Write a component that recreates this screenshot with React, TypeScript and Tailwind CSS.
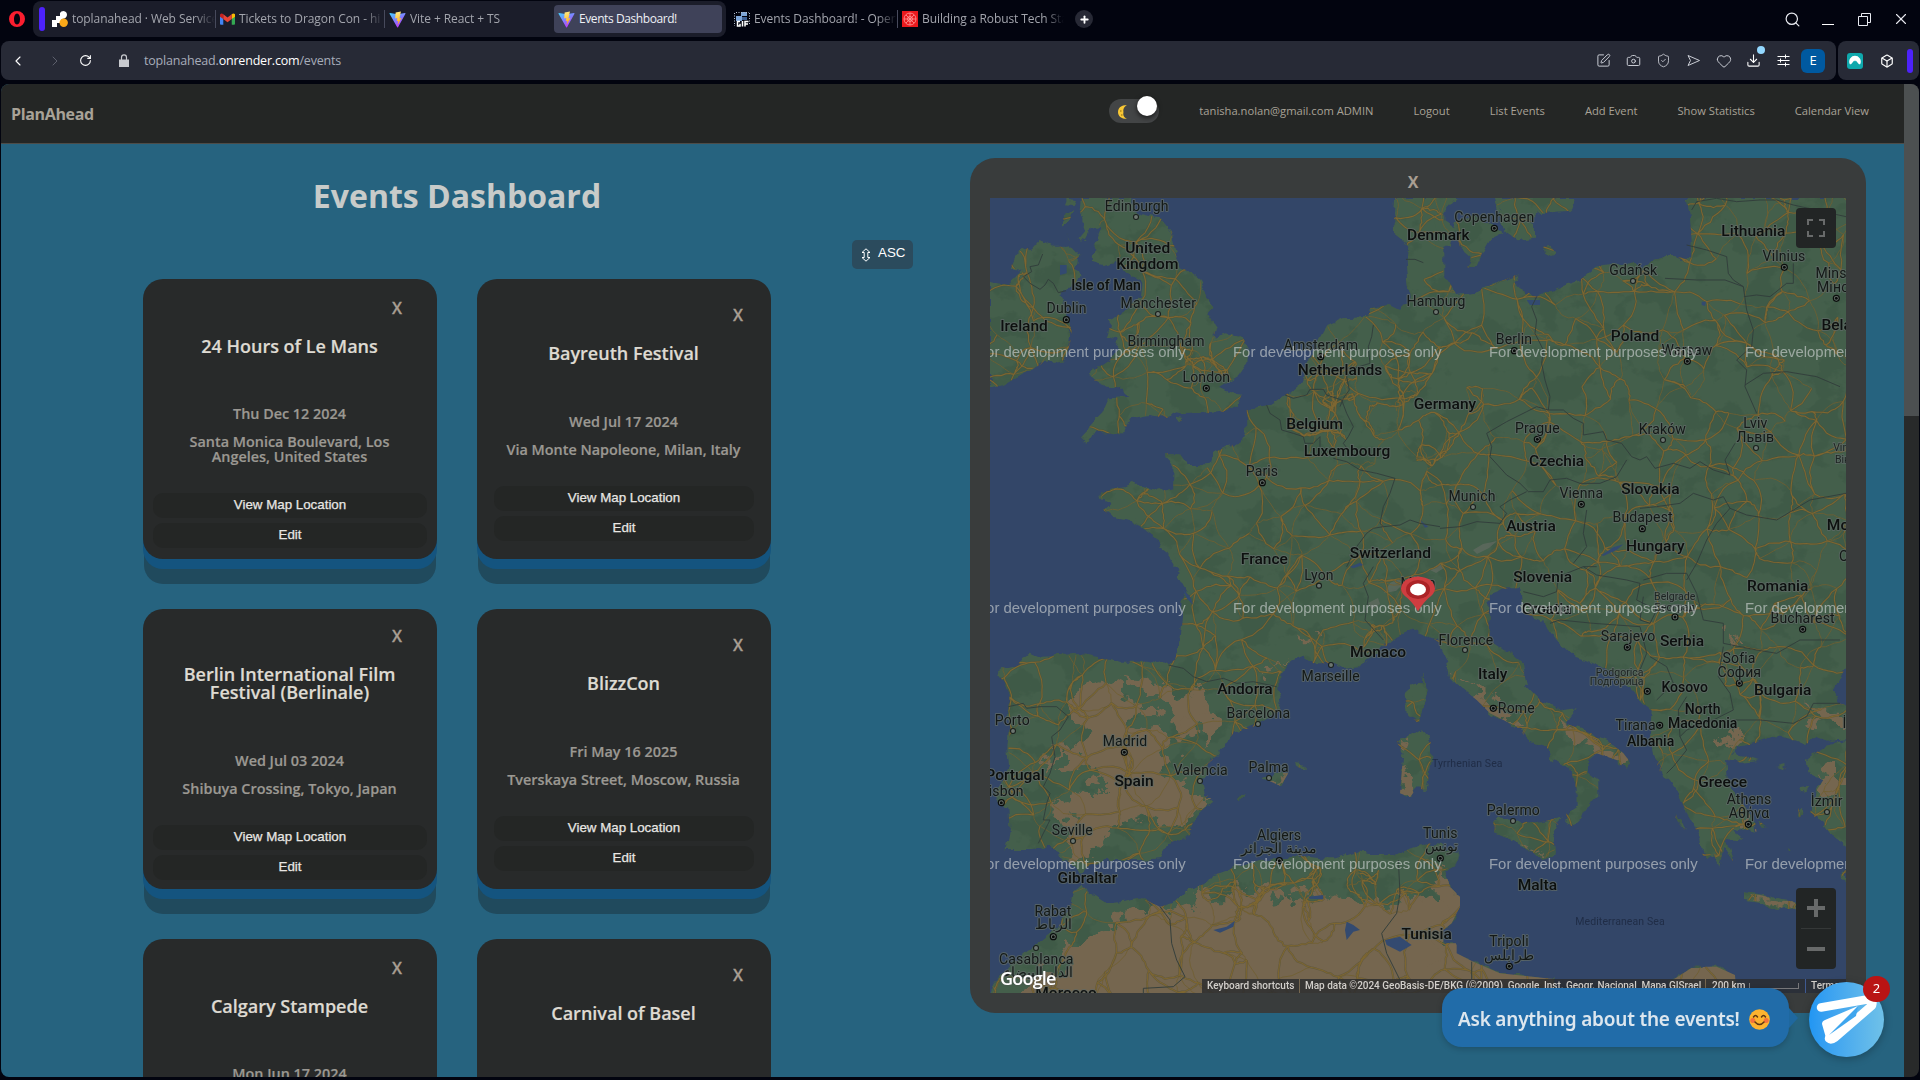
import React from "react";
import {
  Box, Camera, ChevronLeft, ChevronRight, Download, Heart, PenSquare,
  Plus, RotateCw, Search, ShieldCheck, X,
} from "lucide-react";

/* ---------- browser chrome ---------- */

const ViteIcon = () => (
  <svg viewBox="0 0 32 32" className="h-[17px] w-[17px] shrink-0">
    <defs>
      <linearGradient id="va" x1="0" y1="0" x2="0.6" y2="1"><stop offset="0" stopColor="#41d1ff" /><stop offset="1" stopColor="#bd34fe" /></linearGradient>
      <linearGradient id="vb" x1="0.4" y1="0" x2="0.6" y2="1"><stop offset="0" stopColor="#ffea83" /><stop offset="1" stopColor="#ffa800" /></linearGradient>
    </defs>
    <path d="M31 5 17 30.500q-.8 1-1.600 0L1 5q-.5-1.500 1-1.300L16 6.200 30 3.700q1.500 0 1 1.300z" fill="url(#va)" />
    <path d="m22.500 1-10 2-.8 11 4-.9-1 6 3-.8-1.700 8 7.600-13-4 .7z" fill="url(#vb)" />
  </svg>
);

const ServiceIcon = () => (
  <svg viewBox="0 0 16 16" className="h-4 w-4 shrink-0">
    <path d="M0 16V9h4V5h4V2q1-2 3.500-2Q15 .500 15 4q-.5 3.500-4.500 4L9 9v3H5v4z" fill="#fff" />
    <circle cx="11.700" cy="11.700" r="4.200" fill="#fba919" />
  </svg>
);

const GmailIcon = () => (
  <svg viewBox="0 0 16 12" className="h-3 w-[15px] shrink-0">
    <path d="M0 1.500h3.500V12H1q-1 0-1-1z" fill="#4285f4" />
    <path d="M12.500 1.500H16V11q0 1-1 1h-2.500z" fill="#34a853" />
    <path d="M12.500 1q2-2 3.500 0v2.500l-3.500 2.600z" fill="#fbbc04" />
    <path d="M3.500 1 8 4.400 12.500 1v5L8 9.500 3.500 6z" fill="#ea4335" />
    <path d="M0 1.500Q1.500-1 3.500 1v5L0 3.500z" fill="#c5221f" />
  </svg>
);

const GifIcon = () => (
  <svg viewBox="0 0 16 16" className="h-4 w-4 shrink-0">
    <path d="M7 1h6v4H7zM2 5h6v5H2z" fill="#7ea6d8" />
    <path d="M.5 2v13M15.500 2v12M2 1.500h13" stroke="#b9c4d4" strokeDasharray="1 1.500" />
    <path d="M8 6h5v3H8z" fill="#3e6195" />
    <path d="M6 10.500H3.500V15H6v-2.200M8.500 10v5.500M11 15.500v-5h3.500M11 13h3" stroke="#fff" strokeWidth="1.500" fill="none" />
  </svg>
);

const RedIcon = () => (
  <svg viewBox="0 0 16 16" className="h-4 w-4 shrink-0">
    <path d="M0 0h16v16H0z" fill="#e8191d" />
    <g fill="none" stroke="#ff9a9a" strokeWidth=".8"><circle cx="8" cy="8" r="6" /><circle cx="8" cy="8" r="2.500" /><path d="M8 2v12M2 8h12M4 4l8 8M12 4l-8 8" /></g>
  </svg>
);

function Tab({ icon, title, width, active = false }: { icon: React.ReactNode; title: string; width: string; active?: boolean }) {
  return (
    <div className={"flex h-7 shrink-0 items-center gap-1 rounded pl-1 " + width + (active ? " bg-[#3f4259] text-[#eef0f5]" : " text-[#a3a5ad]")}>
      {icon}
      <span className={"min-w-0 flex-1 overflow-hidden whitespace-nowrap text-[12px] leading-5 " + (active ? "tracking-[-0.42px]" : "tracking-[-0.08px] [mask-image:linear-gradient(90deg,#000_86%,transparent_100%)]")}>{title}</span>
    </div>
  );
}

const Sep = () => <div className="h-[18px] w-px shrink-0 bg-[#474a5c]" />;

function TabStrip() {
  return (
    <div className="flex h-[41px] shrink-0 pt-px">
      <div className="flex w-[33px] items-center pl-[9px] pb-1">
        <svg viewBox="0 0 16 16" className="h-4 w-4"><path fillRule="evenodd" fill="#fa1e2f" d="M8 0a8 8 0 1 0 0 16A8 8 0 0 0 8 0m0 2.500c2 0 3 2.500 3 5.500s-1 5.500-3 5.500S5 11 5 8s1-5.500 3-5.500" /></svg>
      </div>
      <div className="flex h-9 w-[693px] shrink-0 items-center rounded-lg bg-[#1b1d2a] pl-1.5">
        <div className="mr-[3px] h-6 w-1.5 rounded bg-[#4d22fb]" />
        <Tab icon={<ServiceIcon />} title="toplanahead · Web Service · Render" width="w-[167px]" />
        <Sep />
        <Tab icon={<GmailIcon />} title="Tickets to Dragon Con - hi there" width="w-[168px]" />
        <Sep />
        <Tab icon={<ViteIcon />} title="Vite + React + TS" width="w-[169px]" />
        <Tab icon={<ViteIcon />} title="Events Dashboard!" width="w-[168px]" active />
      </div>
      <div className="flex h-9 items-center pl-1">
        <Tab icon={<GifIcon />} title="Events Dashboard! - Opera GX" width="w-[167px]" />
        <Sep />
        <Tab icon={<RedIcon />} title="Building a Robust Tech Stack" width="w-[166px]" />
        <div className="ml-[11px] flex h-[18px] w-[18px] items-center justify-center rounded-full bg-[#272935] text-white"><Plus size={11} strokeWidth={4} /></div>
      </div>
      <div className="ml-auto flex h-9 items-center text-[#e8eaf0]">
        <Search size={17} strokeWidth={1.700} className="mr-[21px]" />
        <div className="mr-6 mt-[11px] h-px w-3 bg-white" />
        <svg viewBox="0 0 13 13" className="mr-[21px] h-[13px] w-[13px]" fill="none" stroke="currentColor"><path d="M3.500 3.500v-3h9v9h-3M.5 3.500h9v9h-9z" /></svg>
        <X size={18} strokeWidth={1.500} className="mr-2.5" />
      </div>
    </div>
  );
}

function AddressBar() {
  return (
    <div className="flex h-[39px] shrink-0 gap-0.5 pl-px">
      <div className="flex w-[1835px] items-center rounded-lg bg-[#272a36] text-[#c9ccd4]">
        <ChevronLeft size={16} strokeWidth={1.700} className="ml-[9px] text-white" />
        <ChevronRight size={16} strokeWidth={1.500} className="ml-[21px] text-[#5d606d]" />
        <RotateCw size={13} strokeWidth={2} className="ml-4 text-white" />
        <svg viewBox="0 0 10 14" className="ml-[27px] h-3.5 w-2.5 shrink-0"><path d="M0 5.500h10V13H0z" fill="#c8cacf" /><path d="M2.500 6V3.500q0-2.700 2.500-2.700t2.500 2.700V6" fill="none" stroke="#c8cacf" strokeWidth="1.200" /></svg>
        <div className="ml-[15px] pt-px text-[12.500px] tracking-[-0.19px] text-[#a7adba]">toplanahead.<span className="text-white">onrender.com</span>/events</div>
        <div className="ml-auto mr-[11px] flex items-center gap-[15px]">
          <PenSquare size={15} strokeWidth={1.600} />
          <Camera size={15} strokeWidth={1.600} />
          <ShieldCheck size={15} strokeWidth={1.400} />
          <svg viewBox="0 0 15 15" className="h-[15px] w-[15px]" fill="none" stroke="currentColor" strokeLinejoin="round"><path d="M2 2.500 13.500 7.500 2 12.500l2.500-5z" /></svg>
          <Heart size={16} strokeWidth={1.500} className="-mx-[.5px]" />
          <div className="relative text-white">
            <Download size={15} strokeWidth={1.700} />
            <div className="absolute -right-1 -top-[7px] h-2 w-2 rounded-full bg-[#93d8ff]" />
          </div>
          <svg viewBox="0 0 15 15" className="h-[15px] w-[15px]" fill="none" stroke="#fff"><path d="M1.500 3.500h12M1.500 7.500h12M1.500 11.500h12M9.500 1.500v4M4.500 5.500v4M9.500 9.500v4" /></svg>
          <div className="-ml-[5px] flex h-6 w-6 items-center justify-center rounded-md bg-[#0059a0] text-[13px] text-white">E</div>
        </div>
      </div>
      <div className="flex w-[81px] items-center rounded-lg bg-[#272a36]">
        <svg viewBox="0 0 16 16" className="ml-[9px] h-4 w-4"><rect width="16" height="16" rx="3" fill="#0fa8ac" /><path d="M2.500 10.500a5.800 5.800 0 1 1 11 0q-.8 1.600-2 .2L8.800 7.500 8 8.600 7.200 7.500 4.500 10.700q-1.200 1.400-2-.2" fill="#fff" /></svg>
        <Box size={14} strokeWidth={2} className="ml-[17px] text-white" />
        <div className="ml-[13px] h-6 w-1.5 rounded bg-[#4d22fb]" />
      </div>
    </div>
  );
}

/* ---------- site ---------- */

function SiteHeader() {
  return (
    <header className="flex h-[60px] shrink-0 items-center border-b border-[#4d4c48] bg-[#242625] pl-[10px] text-[#a8a297]">
      <div className="text-[16px] font-bold tracking-[-0.35px]">PlanAhead</div>
      <div className="ml-auto flex items-center gap-10 pb-1 pr-[35px] text-[11.200px]">
        <div className="relative -mt-px h-6 w-[50px] rounded-full bg-[#434546]">
          <svg viewBox="0 0 10 14" className="absolute left-[9px] top-1.5 h-3.5 w-2.5"><path d="M9 0C3 0 0 3 0 7s3 7 9 7C5 12 5 9 5.500 7 5 5 5.500 2 9 0" fill="#f9c835" /><path d="M2 6h1.500M3 10h1.500" stroke="#8a6410" /></svg>
          <div className="absolute -top-[3px] right-0.5 h-5 w-5 rounded-full bg-white shadow-[0_2px_5px_#000a]" />
        </div>
        <span>tanisha.nolan@gmail.com ADMIN</span>
        <span>Logout</span>
        <span>List Events</span>
        <span>Add Event</span>
        <span>Show Statistics</span>
        <span>Calendar View</span>
      </div>
    </header>
  );
}

type EventItem = { title: string[]; date: string; place: string[]; pad: string; gap: string; wide: boolean };

const EVENTS: EventItem[] = [
  { title: ["24 Hours of Le Mans"], date: "Thu Dec 12 2024", place: ["Santa Monica Boulevard, Los", "Angeles, United States"], pad: "pt-[19px]", gap: "mt-[48px]", wide: true },
  { title: ["Bayreuth Festival"], date: "Wed Jul 17 2024", place: ["Via Monte Napoleone, Milan, Italy"], pad: "pt-[26px]", gap: "mt-[49px]", wide: false },
  { title: ["Berlin International Film", "Festival (Berlinale)"], date: "Wed Jul 03 2024", place: ["Shibuya Crossing, Tokyo, Japan"], pad: "pt-[17px]", gap: "mt-[49px]", wide: true },
  { title: ["BlizzCon"], date: "Fri May 16 2025", place: ["Tverskaya Street, Moscow, Russia"], pad: "pt-[26px]", gap: "mt-[49px]", wide: false },
  { title: ["Calgary Stampede"], date: "Mon Jun 17 2024", place: ["Las Ramblas, Barcelona, Spain"], pad: "pt-[19px]", gap: "mt-[48px]", wide: true },
  { title: ["Carnival of Basel"], date: "Mon Feb 17 2025", place: ["Basel, Switzerland"], pad: "pt-[26px]", gap: "mt-[58px]", wide: false },
];

function EventCard({ e }: { e: EventItem }) {
  return (
    <article className={"flex h-[280px] w-[294px] flex-col items-center rounded-[20px] bg-[#282a2a] text-center shadow-[0_10px_0_#14547f,0_26px_0_-1px_#204a5d] " + e.pad}>
      <div className={"self-end text-[16px] font-semibold leading-5 text-[#a89e92] [-webkit-text-stroke:0.3px] " + (e.wide ? "pr-[35px]" : "pr-[28px]")}>X</div>
      <h2 className="mt-[19px] text-[18px] font-semibold leading-[18px] text-[#dedad2] [-webkit-text-stroke:0.2px]">
        {e.title.map((t) => <div key={t} className="-translate-x-[.5px]">{t}</div>)}
      </h2>
      <div className={"-translate-x-[.5px] text-[14.400px] font-semibold leading-[22px] text-[#9b9892] [-webkit-text-stroke:0.2px] " + e.gap}>{e.date}</div>
      <div className="mt-[9px] -translate-x-[.5px] text-[14.400px] font-semibold leading-[15px] text-[#9b9892] [-webkit-text-stroke:0.2px]">
        {e.place.map((t) => <div key={t}>{t}</div>)}
      </div>
      <div className={"mt-[29px] flex flex-col gap-[5px] font-['Liberation_Sans',Arial,sans-serif] text-[13.333px] leading-[24px] text-[#e8e6e3] [-webkit-text-stroke:0.25px] " + (e.wide ? "w-[274px]" : "w-[260px]")}>
        <button className="h-[25px] rounded-[10px] bg-[#242625] pb-px">View Map Location</button>
        <button className="h-[25px] rounded-[10px] bg-[#242625] pb-px">Edit</button>
      </div>
    </article>
  );
}

/* ---------- map ---------- */

/* Each sheet of the map is drawn at three units per pixel; these are the sheet origins. */
const SHEETS = ["translate(-30 -48) scale(.33333)", "translate(450 -48) scale(.33333)", "translate(-30 362) scale(.33333)", "translate(450 362) scale(.33333)"];

const LAND: [number, string][] = [
  [0, "365,144 360,200 375,240 355,265 375,270 395,230 425,225 400,290 398,335 430,345 470,335 500,370 550,400 545,440 520,455 490,490 460,500 435,510 450,530 440,560 480,570 470,600 450,630 420,650 390,670 405,695 440,710 480,712 510,740 450,745 430,790 400,820 362,860 375,875 400,858 430,850 490,850 510,805 570,795 620,805 650,790 680,795 740,790 790,785 830,765 845,735 800,720 780,710 830,680 862,640 865,600 850,565 800,550 760,560 770,530 740,485 755,470 735,420 720,390 690,365 655,350 645,300 635,245 600,205 520,185 520,144"],
  [0, "90,395 145,405 190,360 150,355 175,305 215,290 245,273 280,290 330,290 355,320 350,350 365,385 345,400 305,430 320,500 335,540 330,580 315,630 250,640 180,675 130,705 90,715"],
  [0, "1305,144 1302,190 1305,245 1330,265 1345,290 1340,330 1345,400 1350,450 1320,480 1290,465 1230,475 1225,500 1150,505 1105,525 1080,570 1060,610 1040,650 1030,690 1000,715 970,740 940,760 900,770 860,780 858,850 845,875 800,890 760,910 750,940 720,945 680,945 655,910 620,910 640,950 640,1015 590,1025 545,1010 520,998 490,1012 430,1020 422,1045 450,1060 430,1080 455,1100 510,1110 545,1130 580,1155 610,1180 600,1195 620,1210 640,1240 640,1250 665,1270 680,1290 1450,1290 1450,144"],
  [0, "310,200 340,180 325,220 308,230"], [0, "320,146 345,150 340,162 315,160"], [0, "320,255 335,275 325,265"], [0, "650,800 675,803 660,814"],
  [1, "0,380 30,400 50,435 90,430 130,415 180,395 240,370 220,395 240,415 290,440 350,415 420,390 470,350 540,335 600,345 680,320 755,325 755,270 750,200 740,144 1230,144 1230,1300 -10,1300 -10,375"],
  [1, "190,144 180,180 230,205 285,215 285,260 230,268 190,240 165,144"], [1, "405,144 390,182 300,190 240,230 180,200 185,144"],
  [1, "40,215 100,195 165,230 190,245 150,265 130,300 110,345 80,355 95,320 60,290"], [1, "-10,200 50,240 35,290 -10,290"], [1, "310,290 325,285 342,300 330,315 312,305"], [1, "0,144 50,144 20,180 -5,190"],
  [2, "640,-20 660,30 655,50 690,115 672,100 668,180 660,250 645,300 600,315 560,305 480,305 400,292 360,285 250,290 215,275 185,295 175,312 120,325 115,345 135,370 150,400 145,440 150,500 145,560 150,620 130,660 105,710 120,735 145,740 148,800 137,870 215,870 270,860 300,875 315,905 340,925 360,935 385,918 440,900 540,900 600,895 625,850 690,825 700,780 730,745 760,722 735,700 725,660 750,610 790,560 820,520 880,500 950,460 965,430 955,390 955,350 985,310 1030,290 1060,310 1110,310 1150,330 1200,325 1220,295 1270,265 1310,230 1350,210 1390,225 1450,250 1450,-20"],
  [2, "1390,343 1400,390 1385,450 1375,490 1345,465 1335,410 1355,375 1385,365"],
  [2, "1385,505 1410,530 1415,580 1400,690 1370,685 1350,712 1320,700 1325,640 1330,580 1310,545 1340,535"],
  [2, "90,1310 105,1270 150,1215 220,1160 290,1105 330,1040 340,990 365,970 385,1000 435,1030 490,1025 545,1015 600,1040 640,1030 680,990 740,970 760,945 830,920 900,905 1000,885 1080,895 1130,895 1190,875 1230,885 1300,885 1340,870 1400,850 1450,855 1450,1310"],
  [2, "910,655 950,638 985,640 962,678 940,668"], [2, "832,712 855,698 850,712 838,720"], [2, "1008,612 1040,618 1040,630 1012,622"],
  [3, "-10,-20 1230,-20 1230,300 1180,390 1200,430 1230,440 1230,540 1170,545 1130,530 1095,555 1060,540 1000,530 930,555 885,560 880,580 960,600 900,605 855,600 860,650 870,680 900,720 945,790 950,815 880,800 910,845 860,840 880,905 850,860 838,920 820,880 790,895 780,840 760,790 740,755 720,710 690,660 660,635 640,590 630,520 635,450 600,420 560,380 520,335 440,300 400,290 360,250 325,200 290,175 250,160 245,120 240,85 200,85 150,105 145,190 150,240 210,280 245,310 262,380 310,430 370,450 410,445 375,490 430,510 500,540 550,580 570,605 555,630 530,600 470,580 445,600 440,640 475,665 475,710 445,730 430,770 400,800 375,790 380,760 410,740 410,690 390,620 330,600 320,560 270,545 230,500 150,460 110,420 60,380 30,350 20,300 -10,240"],
  [3, "160,785 180,775 290,790 365,770 340,830 345,880 310,895 215,840 165,820"],
  [3, "-10,870 60,875 50,910 15,930 30,980 60,1010 60,1040 35,1090 10,1110 0,1150 50,1150 50,1180 100,1205 180,1240 340,1257 350,1310 -10,1310"],
  [3, "690,1265 760,1220 830,1220 885,1245 890,1310 690,1310"],
  [3, "915,1000 960,1005 1020,1020 1070,1025 1070,1045 1010,1050 960,1025 915,1020"],
  [3, "1230,540 1150,560 1100,600 1105,640 1150,660 1130,690 1110,760 1150,790 1180,830 1230,870"],
  [3, "1075,745 1090,745 1085,770 1070,775"], [3, "1018,620 1040,615 1035,628"], [3, "1075,685 1105,680 1095,695 1080,693"], [3, "700,760 720,775 735,810 710,780"], [3, "1040,865 1050,870 1045,880"], [3, "955,780 980,800 960,795"], [3, "1205,940 1218,930 1218,965 1206,960"],
];

const TAN: [number, string][] = [
  [2, "370,380 440,370 510,400 500,450 600,500 640,560 600,640 690,680 750,720 700,760 660,810 600,820 600,780 540,760 440,820 380,900 320,880 330,780 290,740 380,690 430,690 350,600 300,600 240,620 250,600 350,560 380,520 330,450"],
  [2, "480,350 560,360 640,390 720,420 770,460 750,540 680,520 640,450 560,400"], [2, "700,460 780,450 760,560 680,520"],
  [2, "180,1299 300,1200 360,1150 440,1090 540,1045 640,1060 760,1000 900,1000 1000,1020 1180,1010 1260,1050 1300,1020 1450,1000 1450,1340 180,1340"],
  [2, "1020,230 1040,225 1045,250 1025,250"], [2, "1070,210 1100,225 1080,250"], [2, "880,320 950,330 985,295 960,330 900,340"],
  [2, "1320,630 1360,650 1350,712 1318,700"], [2, "940,640 985,640 962,678"], [2, "1305,540 1330,535 1325,555"],
  [3, "-10,930 30,980 80,1010 80,1040 55,1090 30,1110 30,1150 120,1195 340,1240 380,1340 -10,1340"],
  [3, "360,490 430,510 500,540 560,580 570,610 550,630 450,560 380,530"], [3, "60,370 120,400 220,490 200,500 100,420"],
  [3, "680,1265 760,1200 885,1225 910,1340 680,1340"], [3, "950,1010 1070,1025 1070,1045 1000,1050"],
  [3, "1095,440 1200,440 1218,500 1130,480"], [3, "840,520 870,520 880,560 850,560"], [3, "1130,650 1218,620 1218,700 1150,700"], [3, "860,205 890,215 870,240"], [3, "900,740 945,790 950,815 915,800"], [3, "200,845 310,880 330,895 250,870"],
];

const LAKES: [number, string][] = [
  [2, "1160,1085 1180,1095 1200,1110 1180,1115 1160,1140 1155,1110"], [2, "1275,1140 1320,1130 1355,1155 1320,1175 1280,1155"],
  [2, "760,1110 800,1100 825,1082 820,1100 780,1118"], [2, "1045,1010 1090,1005 1090,1018 1050,1016"], [2, "668,88 690,110 700,135 680,115"],
  [1, "485,1215 520,1192 550,1183 530,1200 490,1218"], [1, "260,450 300,450 300,465 270,465"], [1, "785,455 798,455 795,468 785,465"],
  [0, "300,345 320,345 320,370 300,375"], [0, "1170,1250 1200,1238 1210,1245 1180,1255"], [0, "1380,1110 1405,1130 1395,1133"],
];

const BORDERS: [number, string][] = [
  [0, "248,312 235,345 210,350 215,365 190,380 210,400 240,418 255,405 265,388 280,400 295,428 318,422"],
  [0, "1338,328 1365,328 1390,338"], [0, "1240,525 1235,560 1225,590 1230,640 1180,655 1160,680 1168,720 1150,745 1140,770"],
  [0, "975,735 1000,745 1040,735 1050,718 1090,718 1100,735 1145,750 1160,790 1180,830 1165,860 1150,880 1165,900"],
  [0, "920,765 930,790 960,810 965,840 1000,850 1030,860 1035,880 1060,880 1080,860 1080,900"], [0, "1120,925 1160,935 1200,960 1250,970 1305,985 1290,1030 1270,1070 1260,1120 1270,1130 1240,1135 1220,1150 1190,1190 1160,1250"],
  [0, "1270,1130 1320,1125 1350,1110 1380,1120 1440,1130"],
  [1, "290,440 275,470 290,510 285,550 310,600 305,640 315,690 330,740 325,780"],
  [1, "325,780 290,770 260,785 200,815 140,850 155,890 150,920 200,975 240,1000 265,1025 310,1025 330,990 380,985 420,1000 480,1000 530,980 560,930"],
  [1, "325,780 370,780 400,805 430,820 430,855 490,845 500,870 545,880 575,920 600,930 620,920 645,955 700,940 750,955 780,935 820,960 870,975"],
  [1, "675,385 770,390 855,390 910,410 920,480 940,540 935,590 890,630 920,660 915,710 950,790"],
  [1, "740,285 800,300 860,320 865,370 880,390 910,410"], [1, "755,180 770,155 830,145 890,155 960,150 1010,150 1060,165 1218,200"],
  [1, "912,440 950,435 990,440 1040,400 1060,400 1060,340"], [1, "915,705 970,670 1040,665 1130,680 1200,710"],
  [1, "870,975 855,930 885,880"], [1, "870,1075 920,1095 1010,1110 1060,1080 1110,1050 1218,1030"], [1, "870,1075 830,1120 800,1170 770,1240 740,1290"],
  [1, "820,1050 850,1040 870,1075"], [1, "600,1075 650,1070 720,1060 760,1030 820,1050"], [1, "440,1080 430,1150 440,1190 400,1240"],
  [1, "0,1135 60,1130 110,1115 180,1120 200,1090 180,1070 210,1050 260,1025"],
  [2, "145,440 190,430 200,445 240,440 290,440 325,470 300,510 275,530 285,590 270,640 250,680 270,700 260,730 250,780 270,780 235,850"],
  [2, "625,315 670,325 700,350 740,365 790,355 830,370 880,365 950,380"],
  [2, "600,1040 630,1080 635,1150 650,1200 675,1250 640,1280 550,1285 550,1299"], [2, "1315,900 1320,1000 1310,1060 1265,1120 1280,1180 1320,1260"],
  [2, "1240,20 1210,70 1225,110 1215,180 1270,240"],
  [3, "250,95 310,110 350,95 355,50 430,20 470,20"], [3, "430,20 470,45 560,60 600,70 590,120 650,150 630,190 600,180 610,110"],
  [3, "610,60 680,40 740,40 770,100 790,180 850,190 850,250 950,270 1010,280 1080,240 1200,240"],
  [3, "330,190 360,180 460,190 600,200 620,280 600,330 560,370"], [3, "630,290 680,320 700,370 650,420"],
  [3, "850,260 835,350 870,400 880,450 820,480 740,510 720,530 715,450 740,410"], [3, "880,480 960,480 1060,490 1100,470 1120,430 1200,430"], [3, "720,530 740,570 700,620 680,640"], [3, "95,1205 95,1257"],
];

function Shapes({ items }: { items: [number, string][] }) {
  return <>{items.map(([s, pts], i) => <polygon key={i} points={pts} transform={SHEETS[s]} />)}</>;
}

/* Deterministic pseudo-random source so the road mesh is identical on every render. */
function rng(seed: number) {
  let s = seed;
  return () => {
    s = (s * 1664525 + 1013904223) % 4294967296;
    return s / 4294967296;
  };
}

function roadMesh(): [string, string] {
  const r = rng(11);
  const pts: [number, number][] = [];
  const step = 27;
  for (let y = -10; y < 820; y += step) {
    for (let x = -10; x < 880; x += step) pts.push([x + (r() - 0.5) * 24, y + (r() - 0.5) * 24]);
  }
  const hot: [number, number, number][] = [[375, 195, 38], [345, 190, 26], [330, 230, 40], [215, 170, 22], [300, 690, 35], [400, 690, 35], [240, 700, 30], [420, 250, 36], [400, 440, 26]];
  hot.forEach(([cx, cy, sp]) => { for (let i = 0; i < 9; i++) pts.push([cx + (r() - 0.5) * 2 * sp, cy + (r() - 0.5) * 1.3 * sp]); });
  let main = "";
  let minor = "";
  pts.forEach((a, i) => {
    const near = pts.map((b, j) => ({ b, j, d: Math.hypot(a[0] - b[0], a[1] - b[1]) })).filter((n) => n.j > i && n.d < 42).sort((p, q) => p.d - q.d).slice(0, 3);
    near.forEach(({ b }) => {
      const dx = b[0] - a[0];
      const dy = b[1] - a[1];
      const bow = (r() - 0.5) * 0.35;
      let seg = "M" + a[0].toFixed(1) + " " + a[1].toFixed(1);
      for (let k = 1; k < 7; k++) {
        const t = k / 7;
        const w = 4 * t * (1 - t) * bow;
        seg += "L" + (a[0] + dx * t - dy * w + (r() - 0.5) * 1.800).toFixed(1) + " " + (a[1] + dy * t + dx * w + (r() - 0.5) * 1.800).toFixed(1);
      }
      seg += "L" + b[0].toFixed(1) + " " + b[1].toFixed(1);
      const pick = r();
      if (pick > 0.4) main += seg; else if (pick > 0.1) minor += seg;
    });
  });
  return [main, minor];
}
const [ROADS, MINOR_ROADS] = roadMesh();

/* sheet, centre x, baseline y, text */
const COUNTRIES: [number, number, number, string][] = [
  [0, 563, 309, "United"], [0, 562, 358, "Kingdom"], [0, 192, 545, "Ireland"], [0, 1140, 677, "Netherlands"], [0, 1064, 839, "Belgium"], [0, 1161, 918, "Luxembourg"], [0, 913, 1242, "France"], [0, 1291, 1224, "Switzerland"], [0, 1435, 272, "Denmark"], [0, 1455, 778, "Germany"],
  [1, 940, 260, "Lithuania"], [1, 585, 575, "Poland"], [1, 350, 948, "Czechia"], [1, 631, 1032, "Slovakia"], [1, 273, 1143, "Austria"], [1, 646, 1203, "Hungary"], [1, 1223, 542, "Belarus"], [1, 1250, 1142, "Moldova"],
  [2, 1254, 291, "Monaco"], [2, 855, 402, "Andorra"], [2, 522, 678, "Spain"], [2, 165, 660, "Portugal"], [2, 382, 969, "Gibraltar"], [2, 1400, 1137, "Tunisia"], [2, 318, 1316, "Morocco"],
  [3, 308, 66, "Slovenia"], [3, 1013, 93, "Romania"], [3, 320, 162, "Croatia"], [3, 726, 258, "Serbia"], [3, 158, 357, "Italy"], [3, 1028, 407, "Bulgaria"], [3, 848, 681, "Greece"], [3, 292, 990, "Malta"],
];
const MID: [number, number, number, string][] = [
  [0, 438, 421, "Isle of Man"], [3, 734, 396, "Kosovo"], [3, 788, 463, "North"], [3, 788, 506, "Macedonia"], [3, 632, 560, "Albania"],
];
const CITIES: [number, number, number, string][] = [
  [0, 530, 185, "Edinburgh"], [0, 595, 476, "Manchester"], [0, 320, 490, "Dublin"], [0, 618, 590, "Birmingham"], [0, 739, 698, "London"], [0, 1083, 602, "Amsterdam"], [0, 906, 980, "Paris"], [0, 1428, 470, "Hamburg"],
  [1, 163, 218, "Copenhagen"], [1, 580, 377, "Gdańsk"], [1, 1032, 335, "Vilnius"], [1, 222, 584, "Berlin"], [1, 741, 617, "Warsaw"], [1, 292, 851, "Prague"], [1, 667, 853, "Kraków"], [1, 946, 835, "Lviv"], [1, 946, 878, "Львів"], [1, 96, 1055, "Munich"], [1, 424, 1046, "Vienna"], [1, 608, 1118, "Budapest"], [1, 1184, 385, "Minsk"], [1, 1190, 428, "Мінск"], [1, 1258, 1235, "Odesa"],
  [2, 1077, 62, "Lyon"], [2, 1374, 85, "Milan"], [2, 1112, 365, "Marseille"], [2, 895, 476, "Barcelona"], [2, 157, 497, "Porto"], [2, 495, 560, "Madrid"], [2, 722, 647, "Valencia"], [2, 926, 638, "Palma"], [2, 127, 709, "Lisbon"], [2, 337, 826, "Seville"], [2, 957, 842, "Algiers"], [2, 957, 881, "مدينة الجزائر"], [2, 279, 1070, "Rabat"], [2, 279, 1109, "الرباط"], [2, 229, 1214, "Casablanca"], [2, 235, 1252, "الدار البيضاء"],
  [3, 1, 836, "Tunis"], [3, 5, 875, "تونس"],
  [3, 78, 255, "Florence"], [3, 1088, 191, "Bucharest"], [3, 564, 245, "Sarajevo"], [3, 897, 311, "Sofia"], [3, 898, 353, "София"], [3, 229, 461, "Rome"], [3, 587, 512, "Tirana"], [3, 927, 734, "Athens"], [3, 927, 776, "Αθήνα"], [3, 1160, 740, "İzmir"], [3, 220, 767, "Palermo"], [3, 207, 1160, "Tripoli"], [3, 207, 1200, "طرابلس"], [3, 1284, 506, "İstanbul"],
];
const SMALL: [number, number, number, string][] = [
  [3, 704, 120, "Belgrade"], [3, 704, 153, "Београд"], [3, 539, 348, "Podgorica"], [3, 530, 377, "Подгорица"], [1, 1244, 905, "Vinnytsia"], [1, 1244, 941, "Вінниця"],
];
const SEAS: [number, number, number, string][] = [[3, 82, 622, "Tyrrhenian Sea"], [3, 540, 1096, "Mediterranean Sea"]];

const CAPITALS: [number, number, number][] = [
  [0, 319, 509], [0, 739, 715], [0, 1082, 620], [0, 907, 998], [1, 163, 235], [1, 1033, 352], [1, 1189, 445], [1, 223, 602], [1, 742, 634], [1, 292, 868], [1, 424, 1063], [1, 607, 1136],
  [2, 493, 577], [2, 124, 728], [2, 958, 902], [2, 280, 1130], [3, 1, 895], [3, 705, 171], [3, 562, 262], [3, 1088, 208], [3, 898, 370], [3, 622, 394], [3, 160, 445], [3, 659, 496], [3, 925, 793], [3, 208, 1219],
];
const TOWNS: [number, number, number][] = [
  [0, 528, 201], [0, 594, 492], [0, 1428, 486], [1, 579, 393], [1, 669, 870], [1, 948, 894], [1, 99, 1071], [2, 1077, 77], [2, 1113, 315], [2, 894, 492], [2, 159, 513], [2, 720, 663], [2, 927, 654], [2, 339, 843], [2, 228, 1164], [3, 75, 270], [3, 1161, 756], [3, 219, 783],
];

const OX = [-30, 450, -30, 450];
const OY = [-48, -48, 362, 362];

function Labels({ items, cls }: { items: [number, number, number, string][]; cls: string }) {
  return <g className={cls}>{items.map(([s, x, y, t], i) => <text key={i} x={OX[s] + x / 3} y={OY[s] + y / 3 - 0.4} textAnchor="middle">{t}</text>)}</g>;
}

const HALO = "[paint-order:stroke] [stroke:#5f6a67] [stroke-width:2px] [stroke-linejoin:round] [stroke-opacity:0.75] ";

function EuropeMap() {
  return (
    <svg viewBox="0 0 856 795" className="block h-[795px] w-[856px] bg-[#334668] font-[Roboto,'Noto_Sans',sans-serif]">
      <defs>
        <filter id="terrain" x="0" y="0" width="856" height="795" filterUnits="userSpaceOnUse" colorInterpolationFilters="sRGB">
          <feTurbulence type="fractalNoise" baseFrequency="0.08" numOctaves="3" seed="3" result="n" />
          <feDisplacementMap in="SourceGraphic" in2="n" scale="9" xChannelSelector="R" yChannelSelector="G" result="land" />
          <feTurbulence type="fractalNoise" baseFrequency="0.028 0.034" numOctaves="5" seed="8" result="m" />
          <feColorMatrix in="m" type="matrix" values="0 0 0 0 0.225  0 0 0 0 0.33  0 0 0 0 0.26  14 0 0 0 -7.5" result="patch" />
          <feComponentTransfer in="patch" result="soft"><feFuncA type="linear" slope="0.42" /></feComponentTransfer>
          <feComposite in="soft" in2="land" operator="in" result="patches" />
          <feMerge><feMergeNode in="land" /><feMergeNode in="patches" /></feMerge>
        </filter>
        <filter id="dry" x="0" y="0" width="856" height="795" filterUnits="userSpaceOnUse" colorInterpolationFilters="sRGB">
          <feTurbulence type="fractalNoise" baseFrequency="0.05" numOctaves="4" seed="21" result="n" />
          <feDisplacementMap in="SourceGraphic" in2="n" scale="48" xChannelSelector="R" yChannelSelector="G" />
        </filter>
        <clipPath id="coast">{LAND.map(([s, p], i) => <polygon key={i} points={p} transform={SHEETS[s]} />)}</clipPath>
      </defs>
      <g filter="url(#terrain)"><g fill="#445f4b"><Shapes items={LAND} /></g></g>
      <g clipPath="url(#coast)">
        <g filter="url(#dry)" fill="#75664f"><Shapes items={TAN} /></g>
        <path d="M290 770h566v25H290zM500 745h60v50h-60z" fill="#75664f" />
        <path d="M400 385l8-4 6 4-8 8-12 2zM378 405l10-5 2 6-8 6zM483 352l10-6 14-3-8 7-12 6zM440 372l10-7 4 5-8 5z" fill="#6c6d67" opacity=".55" />
        <path d={MINOR_ROADS} fill="none" stroke="#715f31" strokeWidth=".8" />
        <path d={ROADS} fill="none" stroke="#4e4f34" strokeWidth="2" opacity=".55" />
        <path d={ROADS} fill="none" stroke="#7d6631" strokeWidth="1.100" />
      </g>
      <g fill="#334a70"><Shapes items={LAKES} /></g>
      <g fill="none" stroke="#313d3b" strokeWidth="2.800">{BORDERS.map(([s, p], i) => <polyline key={i} points={p} transform={SHEETS[s]} />)}</g>
      {CAPITALS.map(([s, x, y], i) => <g key={i}><circle cx={OX[s] + x / 3} cy={OY[s] + y / 3} r="3" fill="#6c7670" stroke="#0b0e0d" strokeWidth="1.200" /><circle cx={OX[s] + x / 3} cy={OY[s] + y / 3} r="1.500" fill="#0b0e0d" /></g>)}
      {TOWNS.map(([s, x, y], i) => <circle key={i} cx={OX[s] + x / 3} cy={OY[s] + y / 3} r="2.500" fill="#6c7670" stroke="#1a201d" strokeWidth="1.100" />)}
      <Labels items={SEAS} cls="fill-[#202d47] text-[10.500px] tracking-[0.1px]" />
      <Labels items={SMALL} cls={HALO + "fill-[#1d2422] text-[10.500px]"} />
      <Labels items={CITIES} cls={HALO + "fill-[#141917] text-[14px] tracking-[0.15px]"} />
      <Labels items={MID} cls={HALO + "fill-[#0d100f] text-[14px] font-medium"} />
      <Labels items={COUNTRIES} cls={HALO + "fill-[#0d100f] text-[15.500px] font-medium"} />
      <g className="fill-[#d2d6d6] font-['Liberation_Sans',Arial,sans-serif] text-[14.900px]" opacity=".62">
        {[158.5, 414.5, 670.5].map((y) => [-13, 243, 499, 755].map((x) => <text key={x + "-" + y} x={x} y={y}>For development purposes only</text>))}
      </g>
      <path d="M428 413.500q-3-6-10-13-7-5-7-10 1-11 17-12 16 1 17 12 0 5-7 10-7 7-10 13" fill="#cf3d40" />
      <ellipse cx="428" cy="391.500" rx="12" ry="9.500" fill="#ab2327" />
      <ellipse cx="428" cy="391.500" rx="8" ry="6" fill="#fff" />
    </svg>
  );
}

function MapPanel() {
  return (
    <section className="h-[855px] w-[896px] rounded-[25px] bg-[#393c3c] px-5">
      <div className="flex h-10 items-center justify-center pt-2 text-[16px] font-bold text-[#a89e92]"><span className="-translate-x-[5px]">X</span></div>
      <div className="relative h-[795px] w-[856px] overflow-hidden">
        <EuropeMap />
        <div className="absolute right-[10px] top-[10px] flex h-10 w-10 items-center justify-center rounded-sm bg-[#222525]">
          <svg viewBox="0 0 18 18" className="h-[18px] w-[18px]" fill="none" stroke="#686a6a" strokeWidth="2"><path d="M1 6V1h5M12 1h5v5M17 12v5h-5M6 17H1v-5" /></svg>
        </div>
        <div className="absolute bottom-6 right-[10px] flex h-[81px] w-10 flex-col items-center rounded-sm bg-[#222525]">
          <svg viewBox="0 0 18 18" className="my-[11px] h-[18px] w-[18px]" stroke="#686a6a" strokeWidth="4"><path d="M0 9h18M9 0v18" /></svg>
          <div className="h-px w-[30px] bg-[#353838]" />
          <svg viewBox="0 0 18 18" className="my-[11px] h-[18px] w-[18px]" stroke="#686a6a" strokeWidth="4"><path d="M0 9h18" /></svg>
        </div>
        <div className="absolute bottom-[3px] left-[10px] font-['Open_Sans',sans-serif] text-[18px] font-semibold leading-6 tracking-[-0.8px] text-white [text-shadow:0_0_2px_#555]">Google</div>
        <div className="absolute bottom-0 right-0 flex h-[14px] w-[644px] items-center whitespace-nowrap bg-[#2a2b2fd0] font-[Roboto,sans-serif] text-[10px] font-medium leading-[14px] text-[#d2cfca]">
          <span className="w-[98px] border-r border-[#75664f] pl-[5px]">Keyboard shortcuts</span>
          <span className="w-[406px] border-r border-[#75664f] pl-[5px] tracking-[-0.02px]">Map data ©2024 GeoBasis-DE/BKG (©2009), Google, Inst. Geogr. Nacional, Mapa GISrael</span>
          <span className="flex w-[100px] items-center gap-1 border-r border-[#3f5a92] pl-1.5">200 km<i className="h-1.5 w-[50px] border border-t-0 border-[#77777a]" /></span>
          <span className="pl-[5px]">Terms</span>
        </div>
      </div>
    </section>
  );
}

/* ---------- chat widget ---------- */

function ChatWidget() {
  return (
    <div className="absolute bottom-5 right-5 flex items-center">
      <div className="relative mb-1 mr-5 flex h-[59px] w-[347px] items-center rounded-[20px] bg-[#216ca9] pl-4 pt-[3px] shadow-[0_2px_6px_#0003]">
        <span className="w-[291px] whitespace-nowrap font-['Noto_Sans',sans-serif] text-[19px] font-semibold tracking-[-0.22px] text-[#dce6ee]">Ask anything about the events!</span>
        <svg viewBox="0 0 21 21" className="h-[21px] w-[21px]">
          <circle cx="10.500" cy="10.500" r="10.300" fill="#fdb32f" />
          <circle cx="3.800" cy="11.500" r="2.500" fill="#f5713c" /><circle cx="17.200" cy="11.500" r="2.500" fill="#f5713c" />
          <path d="M4.500 8q2-3 4 0M12.500 8q2-3 4 0M6 13q4.500 5 9 0" fill="none" stroke="#5c3512" strokeWidth="1.500" strokeLinecap="round" />
        </svg>
        <div className="absolute -right-[9px] top-[20px] h-0 w-0 border-y-[10px] border-l-[9px] border-y-transparent border-l-[#1f689f]" />
      </div>
      <div className="relative h-[75px] w-[75px] rounded-full bg-linear-to-r from-[#2196f3] to-[#6fc1e8] shadow-[0_2px_8px_#0004]">
        <svg viewBox="0 0 75 75" className="h-full w-full">
          <path d="M12 25.500 58 17.500q7-.5 5 6L26 55.500q-4 3-6 1" fill="none" stroke="#fff" strokeWidth="8.500" strokeLinecap="round" strokeLinejoin="round" />
          <path d="M13 42q0-3 3-4L49 24 22 61q-4-1-5-5z" fill="#fff" />
          <path d="m49 24-29 29 27-19z" fill="#3fa6ee" />
        </svg>
        <div className="absolute -right-[6px] -top-[6px] flex h-[26px] w-[27px] items-center justify-center rounded-full bg-[#b91414] font-['Noto_Sans',sans-serif] text-[13px] text-white">2</div>
      </div>
    </div>
  );
}

export default function App() {
  return (
    <div className="flex h-[1080px] w-[1920px] flex-col overflow-hidden bg-[#02040f] font-['Open_Sans','Noto_Sans',sans-serif]">
      <TabStrip />
      <AddressBar />
      <div className="ml-px mt-1 flex h-[993px] w-[1918px] overflow-hidden rounded-lg">
        <div className="relative flex w-[1903px] shrink-0 flex-col bg-[#26637f]">
          <SiteHeader />
          <main className="flex h-[933px] overflow-hidden">
            <div className="flex w-[969px] shrink-0 flex-col">
              <h1 className="mt-[29px] w-[912px] shrink-0 text-center text-[32px] font-bold leading-[46px] text-[#c8cbc9]">Events Dashboard</h1>
              <button className="ml-[851px] mt-[21px] flex h-[29px] w-[61px] shrink-0 items-center gap-1.5 rounded-[5px] bg-[#2b4b5d] pl-2 pb-[3px] font-['Liberation_Sans',Arial,sans-serif] text-[13.333px] text-white">
                <svg viewBox="0 0 10 14" className="mt-1 h-3.5 w-3 shrink-0" fill="none" stroke="currentColor"><path d="m5 .8 4 3.700H6.800v5H9L5 13.200 1 9.500h2.200v-5H1z" /></svg>
                ASC
              </button>
              <div className="ml-[142px] mt-[10px] grid w-[628px] shrink-0 grid-cols-[294px_294px] gap-x-10 gap-y-[50px]">
                {EVENTS.map((e) => <EventCard key={e.title[0]} e={e} />)}
              </div>
            </div>
            <div className="pt-[14px]"><MapPanel /></div>
          </main>
          <ChatWidget />
        </div>
        <div className="w-[15px] bg-[#282a2a]"><div className="h-[332px] bg-[#4c5051]" /></div>
      </div>
    </div>
  );
}
